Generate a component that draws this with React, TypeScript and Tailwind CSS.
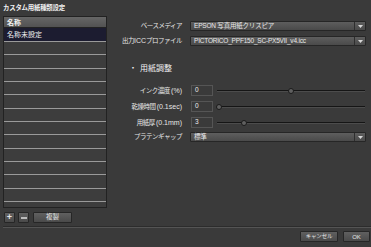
import React from 'react';

const FONT = "font-['Liberation_Sans','Noto_Sans_CJK_JP',sans-serif]";

const Arrow = () => (
  <div className="w-[11px] h-full border-l border-[#2e2e2e] flex items-center justify-center">
    <svg width="5" height="3" viewBox="0 0 5 3">
      <path d="M0 0H5L2.5 3Z" fill="#d8d8d8" />
    </svg>
  </div>
);

const Dropdown = ({ value }: { value: string }) => (
  <div className="w-[176px] h-[10px] flex items-stretch rounded-[1px] border border-[#262626] bg-gradient-to-b from-[#5e5e5e] to-[#4a4a4a]">
    <div className="flex-1 flex items-center pl-[3px] text-[6.5px] leading-none text-[#e8e8e8] whitespace-nowrap tracking-[-0.2px]">
      {value}
    </div>
    <Arrow />
  </div>
);

const FormLabel = ({ children }: { children: React.ReactNode }) => (
  <div className="w-[74px] text-right text-[6.5px] leading-none text-[#e6e6e6] whitespace-nowrap tracking-[-0.5px]">{children}</div>
);

const SliderRow = ({ label, unit, value, pos }: { label: string; unit: string; value: string; pos: number }) => (
  <div className="flex items-center h-[11px]">
    <FormLabel>
      {label} <span className="text-[7px] tracking-normal">{unit}</span>
    </FormLabel>
    <div className="ml-[9px] w-[22px] h-[11px] border border-[#555] bg-[#3a3a3a] flex items-center pl-[3px] text-[6.5px] leading-none text-[#eee]">
      {value}
    </div>
    <div className="relative ml-[4px] w-[148px] h-[11px] flex items-center">
      <div className="w-full h-[2px] bg-[#151515] border-b border-[#4c4c4c]" />
      <div
        className="absolute top-[2.5px] w-[6px] h-[6px] rounded-full bg-[#606060] border border-[#1a1a1a]"
        style={{ left: pos }}
      />
    </div>
  </div>
);

const SmallButton = ({ children, className }: { children: React.ReactNode; className: string }) => (
  <div
    className={`h-[11px] flex items-center justify-center rounded-[1px] border border-[#262626] bg-gradient-to-b from-[#606060] to-[#4a4a4a] text-[#e6e6e6] leading-none ${className}`}
  >
    {children}
  </div>
);

export default function App() {
  const rows = Array.from({ length: 12 });
  return (
    <div className={`w-[371px] h-[247px] bg-[#3a3a3a] flex flex-col overflow-hidden ${FONT}`}>
      {/* title */}
      <div className="h-[16px] pl-[3px] flex items-center text-[6.4px] font-bold text-[#f2f2f2] tracking-[-0.2px] leading-none">
        カスタム用紙種類設定
      </div>

      <div className="flex h-[210px]">
        {/* left list */}
        <div className="w-[108px] pl-[3px] flex flex-col">
          <div className="w-[104px] h-[192px] border border-[#222] bg-[#3d3d3d] flex flex-col overflow-hidden">
            <div className="h-[11px] flex items-center pl-[3px] bg-gradient-to-b from-[#666] to-[#525252] border-b border-[#222] text-[7px] font-bold text-[#f2f2f2] leading-none">
              名称
            </div>
            <div className="h-[14px] flex items-center pl-[3px] bg-[#1c1c30] border-b border-[#9a9a9a] text-[7px] text-[#f2f2f2] leading-none">
              名称未設定
            </div>
            {rows.map((_, i) => (
              <div key={i} className="h-[13.33px] shrink-0 border-b border-[#9a9a9a]" />
            ))}
          </div>
          <div className="flex items-center mt-[4px] ml-[1px] gap-[3px]">
            <SmallButton className="w-[11px] text-[9px] font-bold">+</SmallButton>
            <SmallButton className="w-[11px]">
              <div className="w-[6px] h-[2px] bg-[#bbb]" />
            </SmallButton>
            <SmallButton className="w-[39px] ml-[1px] text-[6.5px]">複製</SmallButton>
          </div>
        </div>

        {/* right form */}
        <div className="flex-1 flex flex-col pt-[5px]">
          <div className="flex items-center">
            <FormLabel>ベースメディア</FormLabel>
            <div className="ml-[8px]">
              <Dropdown value="EPSON 写真用紙クリスピア" />
            </div>
          </div>
          <div className="flex items-center mt-[5px]">
            <FormLabel>
              出力<span className="text-[7px] tracking-normal">ICC</span>プロファイル
            </FormLabel>
            <div className="ml-[8px]">
              <Dropdown value="PICTORICO_PPF150_SC-PX5VII_v4.icc" />
            </div>
          </div>

          <div className="mt-[18px] ml-[21px] h-[9px] flex items-center text-[8px] text-[#f2f2f2] leading-none">
            <span className="mr-[3px]">・</span>用紙調整
          </div>

          <div className="mt-[12px] flex flex-col gap-[5px]">
            <SliderRow label="インク濃度" unit="(%)" value="0" pos={71} />
            <SliderRow label="乾燥時間" unit="(0.1sec)" value="0" pos={-1} />
            <SliderRow label="用紙厚" unit="(0.1mm)" value="3" pos={24} />
          </div>

          <div className="flex items-center mt-[4px]">
            <FormLabel>プラテンギャップ</FormLabel>
            <div className="ml-[8px]">
              <Dropdown value="標準" />
            </div>
          </div>
        </div>
      </div>

      {/* separator */}
      <div className="ml-[3px] h-[2px] border-t border-[#2c2c2c] border-b border-b-[#545454]" />

      {/* bottom buttons */}
      <div className="flex justify-end items-center mt-[3px] pr-[1px] gap-[5px]">
        <SmallButton className="w-[38px] text-[5.5px] tracking-[-0.2px]">キャンセル</SmallButton>
        <SmallButton className="w-[27px] text-[6px]">OK</SmallButton>
      </div>
    </div>
  );
}
